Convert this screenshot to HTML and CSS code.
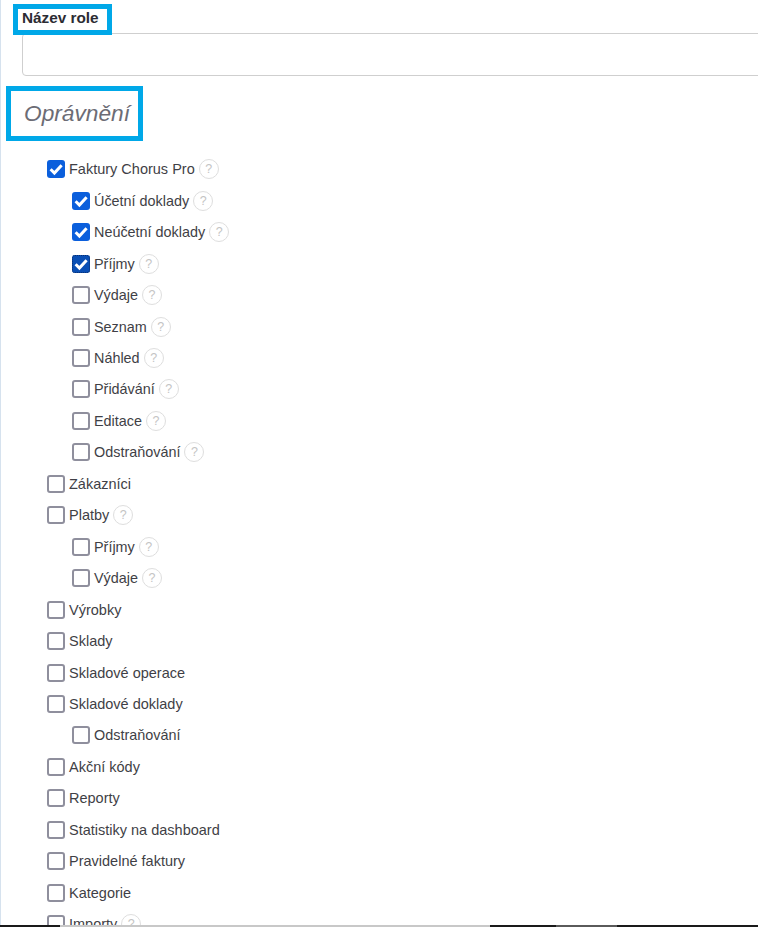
FILE: index.html
```html
<!DOCTYPE html>
<html lang="cs">
<head>
  <meta charset="UTF-8">
  <title>Role</title>
  <link rel="stylesheet" href="styles.css">
</head>
<body>
  <div class="page">
    <!-- nazev role -->
    <div class="name-field">
      <label class="name-label">Název role</label>
      <div class="name-input"></div>
      <span class="mark mark-label"></span>
    </div>

    <!-- opravneni -->
    <div class="perm-head">
      <h2 class="perm-title">Oprávnění</h2>
      <span class="mark mark-title"></span>
    </div>

    <ul class="perms">
      <li class="row"><span class="box on"><svg viewBox="0 0 18 18"><path d="M3.6 9.2l3.8 3.8L14.6 5.2"/></svg></span>Faktury Chorus Pro<span class="help">?</span></li>
      <li class="row sub"><span class="box on"><svg viewBox="0 0 18 18"><path d="M3.6 9.2l3.8 3.8L14.6 5.2"/></svg></span>Účetní doklady<span class="help">?</span></li>
      <li class="row sub"><span class="box on"><svg viewBox="0 0 18 18"><path d="M3.6 9.2l3.8 3.8L14.6 5.2"/></svg></span>Neúčetní doklady<span class="help">?</span></li>
      <li class="row sub"><span class="box on focus"><svg viewBox="0 0 18 18"><path d="M3.6 9.2l3.8 3.8L14.6 5.2"/></svg></span>Příjmy<span class="help">?</span></li>
      <li class="row sub"><span class="box"></span>Výdaje<span class="help">?</span></li>
      <li class="row sub"><span class="box"></span>Seznam<span class="help">?</span></li>
      <li class="row sub"><span class="box"></span>Náhled<span class="help">?</span></li>
      <li class="row sub"><span class="box"></span>Přidávání<span class="help">?</span></li>
      <li class="row sub"><span class="box"></span>Editace<span class="help">?</span></li>
      <li class="row sub"><span class="box"></span>Odstraňování<span class="help">?</span></li>
      <li class="row"><span class="box"></span>Zákazníci</li>
      <li class="row"><span class="box"></span>Platby<span class="help">?</span></li>
      <li class="row sub"><span class="box"></span>Příjmy<span class="help">?</span></li>
      <li class="row sub"><span class="box"></span>Výdaje<span class="help">?</span></li>
      <li class="row"><span class="box"></span>Výrobky</li>
      <li class="row"><span class="box"></span>Sklady</li>
      <li class="row"><span class="box"></span>Skladové operace</li>
      <li class="row"><span class="box"></span>Skladové doklady</li>
      <li class="row sub"><span class="box"></span>Odstraňování</li>
      <li class="row"><span class="box"></span>Akční kódy</li>
      <li class="row"><span class="box"></span>Reporty</li>
      <li class="row"><span class="box"></span>Statistiky na dashboard</li>
      <li class="row"><span class="box"></span>Pravidelné faktury</li>
      <li class="row"><span class="box"></span>Kategorie</li>
      <li class="row"><span class="box"></span>Importy<span class="help">?</span></li>
    </ul>
  </div>

  <!-- spodni okraj okna -->
  <div class="taskbar">
    <span class="bar-dark bar-start"></span>
    <span class="bar-light"></span>
    <span class="bar-dark bar-mid"></span>
    <span class="bar-grey"></span>
    <span class="bar-dark bar-end"></span>
  </div>
</body>
</html>
```
FILE: styles.css
```css
html, body {
  margin: 0;
  height: 927px;
  overflow: hidden;
  background: #fff;
}
body {
  font-family: "Liberation Sans", Arial, sans-serif;
  font-size: 14.5px;
  color: #3f3f46;
}
.page {
  height: 927px;
  border-left: 1px solid #d6e2ee;
  padding-left: 21px;
  overflow: hidden;
  box-sizing: border-box;
}

/* nazev role */
.name-field {
  position: relative;
  padding-top: 9px;
}
.name-label {
  display: block;
  height: 24px;
  font-size: 15.3px;
  font-weight: bold;
  line-height: 17px;
  color: #2c2c33;
}
.name-input {
  height: 41px;
  margin-right: -20px;
  border: 1px solid #cfcfcf;
  border-radius: 4px;
}
.mark {
  position: absolute;
  box-sizing: border-box;
  border: 5px solid #00a8e8;
  pointer-events: none;
}
.mark-label {
  left: -9px;
  top: 4px;
  width: 99px;
  height: 31px;
}

/* opravneni */
.perm-head {
  position: relative;
  height: 77.6px;
}
.perm-title {
  margin: 0;
  padding: 23px 0 0 2px;
  font-size: 22.7px;
  font-weight: normal;
  font-style: italic;
  line-height: 28px;
  color: #6c6c75;
}
.mark-title {
  left: -16px;
  top: 10px;
  width: 137px;
  height: 55px;
}

.perms {
  list-style: none;
  margin: 0;
  padding: 0 0 0 25px;
}
.row {
  display: flex;
  align-items: center;
  height: 31.46px;
  white-space: nowrap;
}
.row.sub {
  padding-left: 25px;
  font-size: 14.4px;
}
.box {
  flex: none;
  box-sizing: border-box;
  width: 18px;
  height: 18px;
  margin-right: 4px;
  border: 2px solid #8f8f9d;
  border-radius: 3px;
  background: #fff;
}
.box.on {
  border: none;
  background: #0b5fdc;
}
.box.focus {
  background: #0a4fb5;
  outline: 1px dotted #0a2f6e;
  outline-offset: -1px;
}
.box svg {
  display: block;
  width: 18px;
  height: 18px;
}
.box path {
  fill: none;
  stroke: #fff;
  stroke-width: 3;
}
.help {
  flex: none;
  box-sizing: border-box;
  width: 20px;
  height: 20px;
  margin-left: 4px;
  border: 1px solid #dedede;
  border-radius: 50%;
  font-size: 12.5px;
  line-height: 18px;
  text-align: center;
  color: #c4c4c4;
}

/* spodni okraj okna */
.taskbar {
  position: fixed;
  left: 0;
  right: 0;
  bottom: 0;
  display: flex;
  height: 2px;
}
.bar-dark { background: #1a1a1a; }
.bar-start { width: 60px; }
.bar-light { width: 430px; background: #c8c8c8; }
.bar-mid { width: 66px; }
.bar-grey { width: 61px; background: #5a5a5a; }
.bar-end { flex: 1; }
```
